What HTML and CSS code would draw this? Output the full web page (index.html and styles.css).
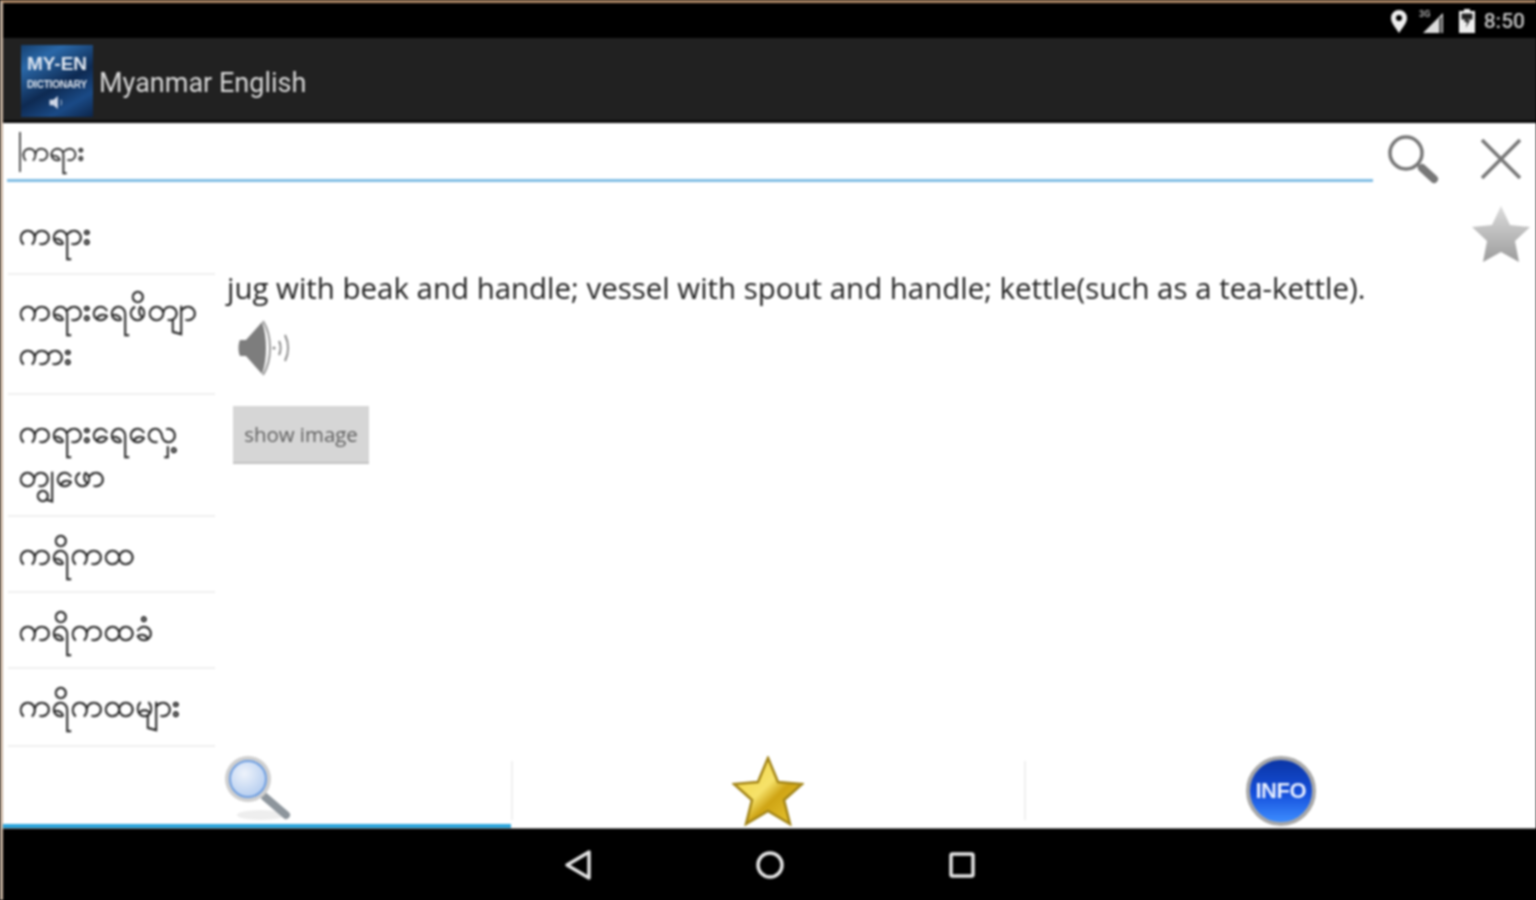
FILE: index.html
```html
<!DOCTYPE html>
<html lang="my">
<head>
    <meta charset="UTF-8">
    <title>Myanmar English</title>
    <link rel="stylesheet" href="styles.css">
</head>
<body>
    <div class="screen">
        <div class="status-bar">
            <svg class="st-pin" width="16" height="23" viewBox="0 0 16 23"><path d="M8 0a8 8 0 0 0-8 8c0 5 5 10 8 15 3-5 8-10 8-15a8 8 0 0 0-8-8z" fill="#eee"/><circle cx="8" cy="8" r="3" fill="#000"/></svg>
            <svg class="st-signal" width="26" height="26" viewBox="0 0 26 26"><path d="M24 5v20H4z" fill="#dcdcdc"/><path d="M20 11v14h3V8z" fill="#555"/><text x="0" y="9" class="st-3g">3G</text></svg>
            <svg class="st-batt" width="16" height="24" viewBox="0 0 16 24"><path d="M5 0h6v2h5v22H0V2h5z" fill="#eee"/><path d="M2.500 4.500h11v6h-11z" fill="#222"/><path d="M9 5 5 13h3l-1 6 4-8H8z" fill="#222"/></svg>
            <span class="clock">8:50</span>
        </div>
        <div class="action-bar">
            <div class="logo">
                <span class="logo-top">MY-EN</span>
                <span class="logo-mid">DICTIONARY</span>
                <svg width="18" height="15" viewBox="0 0 18 16"><path d="M1 5h4l5-4v14l-5-4H1z" fill="#cdd6e6"/><path d="M13 5c1 2 1 4 0 6" stroke="#cdd6e6" fill="none"/></svg>
            </div>
            <span class="app-title">Myanmar English</span>
        </div>
        <div class="search-row">
            <div class="search-input"><span class="caret"></span><span class="my search-text">ကရား</span></div>
            <svg class="search-icon" width="52" height="50" viewBox="0 0 52 50"><circle cx="19" cy="19" r="16" fill="none" stroke="#777" stroke-width="3.500"/><path d="M31 31l4 4" stroke="#777" stroke-width="3"/><path d="M35 34l12 11" stroke="#777" stroke-width="8" stroke-linecap="round"/></svg>
            <svg class="clear-icon" width="42" height="42" viewBox="0 0 42 42"><path d="M2 2l38 38M40 2 2 40" stroke="#777" stroke-width="3.500"/></svg>
        </div>
        <div class="main">
            <ul class="word-list">
                <li class="my">ကရား</li>
                <li class="my">ကရားရေဖိတျာ ကား</li>
                <li class="my">ကရားရေလှေ့ တျွဖော</li>
                <li class="my">ကရိကထ</li>
                <li class="my">ကရိကထခံ</li>
                <li class="my">ကရိကထများ</li>
            </ul>
            <div class="detail">
                <div class="detail-body">
                    <p class="meaning">jug with beak and handle; vessel with spout and handle; kettle(such as a tea-kettle).</p>
                    <svg class="speaker" width="54" height="56" viewBox="0 0 54 56"><path d="M3 20h6L25 2c3 8 4 17 4 26s-1 18-4 26L9 36H3c-2-4-2-12 0-16z" fill="#7d7d7d"/><path d="M26 1c5 8 7 18 7 27s-2 19-7 27" fill="none" stroke="#999" stroke-width="2"/><circle cx="37" cy="28" r="1.500" fill="#888"/><path d="M42 21c2 4 2 10 0 14M48 15c4 8 4 18 0 26" fill="none" stroke="#888" stroke-width="2"/></svg>
                    <button class="show-btn">show image</button>
                </div>
                <svg class="fav-star" width="60" height="58" viewBox="0 0 60 58"><defs><linearGradient id="gs" x1="0" y1="0" x2="0" y2="1"><stop offset="0" stop-color="#dcdcdc"/><stop offset="1" stop-color="#9c9c9c"/></linearGradient></defs><path d="M30 1l9 19 20 2-15 14 4 21-18-10-18 10 4-21L1 22l20-2z" fill="url(#gs)"/></svg>
            </div>
        </div>
        <div class="tabs">
            <div class="tab active">
                <svg class="lens-icon" width="68" height="66" viewBox="0 0 68 66"><defs><radialGradient id="lens" cx=".4" cy=".35" r=".7"><stop offset="0" stop-color="#eef3fb"/><stop offset="1" stop-color="#b3ccef"/></radialGradient></defs><ellipse cx="38" cy="60" rx="24" ry="5" fill="#eee"/><path d="M42 42l21 18" stroke="#8d959c" stroke-width="8" stroke-linecap="round"/><circle cx="25" cy="24" r="23" fill="#cfcfcf"/><circle cx="25" cy="24" r="18" fill="url(#lens)" stroke="#6f9fe2" stroke-width="2"/></svg>
            </div>
            <div class="tab">
                <svg class="gold-star" width="72" height="70" viewBox="0 0 72 70"><defs><linearGradient id="gold" x1="0" y1="0" x2="1" y2="1"><stop offset="0" stop-color="#f3d23c"/><stop offset=".45" stop-color="#f6e26a"/><stop offset=".6" stop-color="#cfa414"/><stop offset="1" stop-color="#eccb36"/></linearGradient></defs><path d="M36 2l10 24 24 2-18 16 6 24-22-13-22 13 6-24L2 28l24-2z" fill="url(#gold)" stroke="#a38517" stroke-width="2.500"/></svg>
            </div>
            <div class="tab">
                <div class="info-btn">INFO</div>
            </div>
        </div>
        <div class="nav-bar">
            <svg width="28" height="32" viewBox="0 0 28 32"><path d="M25 3v26L3 16z" fill="none" stroke="#e4e4e4" stroke-width="3.500" stroke-linejoin="round"/></svg>
            <svg width="30" height="30" viewBox="0 0 30 30"><circle cx="15" cy="15" r="12" fill="none" stroke="#e4e4e4" stroke-width="3.500"/></svg>
            <svg width="28" height="28" viewBox="0 0 28 28"><rect x="3" y="3" width="22" height="22" rx="1.500" fill="none" stroke="#e4e4e4" stroke-width="3.500"/></svg>
        </div>
    </div>
</body>
</html>
```

FILE: styles.css
```css
html, body {
    margin: 0;
    padding: 0;
    background: #000;
}
.screen {
    width: 1536px;
    height: 900px;
    box-sizing: border-box;
    display: flex;
    flex-direction: column;
    border-top: 3px solid #b08a68;
    border-left: 3px solid #c9b5a3;
    background: #fff;
    font-family: "Open Sans", "Noto Sans", sans-serif;
    overflow: hidden;
    filter: blur(0.9px);
}
.my {
    font-family: "Noto Sans", "DejaVu Sans", sans-serif;
    -webkit-text-stroke: 0.4px #222;
}

/* status bar */
.status-bar {
    height: 35px;
    flex: none;
    background: #000;
    display: flex;
    align-items: center;
    justify-content: flex-end;
    padding-right: 11px;
}
.st-pin { margin-right: 12px; margin-top: 2px; }
.st-signal { margin-right: 14px; }
.st-batt { margin-right: 9px; }
.st-3g {
    font-size: 9px;
    font-weight: bold;
    fill: #aaa;
    font-family: "Roboto", sans-serif;
}
.clock {
    color: #c4c4c4;
    font: 500 21px "Roboto", sans-serif;
}

/* action bar */
.action-bar {
    height: 85px;
    box-sizing: border-box;
    flex: none;
    background: #212121;
    border-bottom: 3px solid #0c0c0c;
    display: flex;
    align-items: center;
    padding: 4px 0 0 18px;
}
.logo {
    width: 72px;
    height: 72px;
    background: linear-gradient(150deg, #16406f, #2a68a8 22%, #0e2a52 55%, #1a4a86 78%, #0c2448);
    color: #dfe6f0;
    display: flex;
    flex-direction: column;
    align-items: center;
    font-family: "Liberation Sans", sans-serif;
    font-weight: bold;
    margin-right: 6px;
}
.logo-top { font-size: 19px; margin-top: 10px; line-height: 18px; }
.logo-mid { font-size: 10px; margin-top: 6px; line-height: 12px; white-space: nowrap; letter-spacing: -0.2px; }
.logo svg { margin-top: 4px; }
.app-title {
    color: #d8d8d8;
    font: 400 27px "Roboto", sans-serif;
    margin-top: 4px;
}

/* search */
.search-row {
    height: 60px;
    flex: none;
    display: flex;
    align-items: flex-start;
}
.search-input {
    width: 1366px;
    height: 59px;
    margin-left: 4px;
    box-sizing: border-box;
    border-bottom: 3px solid #80bde4;
    display: flex;
    align-items: center;
    padding: 1px 0 0 12px;
    font-size: 28px;
    color: #333;
}
.search-text { margin-top: 3px; }
.caret {
    width: 2px;
    height: 40px;
    background: #555;
}
.search-icon { margin: 11px 0 0 14px; }
.clear-icon { margin: 15px 0 0 41px; }

/* body */
.main {
    flex: 1;
    display: flex;
    min-height: 0;
}
.word-list {
    list-style: none;
    margin: 0 0 0 5px;
    padding: 16px 0 0;
    width: 207px;
    flex: none;
    font-size: 33px;
    line-height: 44px;
    color: #222;
}
.word-list li {
    box-sizing: border-box;
    min-height: 76px;
    padding: 14px 5px 16px 10px;
    border-bottom: 2px solid #efefef;
}
.word-list li:first-child { padding-top: 12px; padding-bottom: 18px; }
.word-list li:nth-child(2) { padding-top: 12px; padding-bottom: 18px; }
.word-list li:nth-child(3) { padding-bottom: 18px; }
.word-list li:last-child { padding-bottom: 18px; }
.detail {
    flex: 1;
    display: flex;
    align-items: flex-start;
    justify-content: space-between;
    padding-left: 12px;
}
.detail-body {
    padding-top: 85px;
    display: flex;
    flex-direction: column;
    align-items: flex-start;
}
.meaning {
    margin: 0;
    font-size: 29.45px;
    line-height: 40px;
    color: #222;
    white-space: nowrap;
}
.speaker { margin: 12px 0 0 10px; }
.show-btn {
    margin: 30px 0 0 6px;
    width: 136px;
    height: 58px;
    border: none;
    border-bottom: 2px solid #c2c2c2;
    background: #d6d6d6;
    color: #5e5e5e;
    font: 20.4px "Open Sans", sans-serif;
    padding: 0;
}
.fav-star { margin: 22px 5px 0 0; flex: none; }

/* tabs */
.tabs {
    height: 79px;
    flex: none;
    display: flex;
    border-bottom: 1px solid #777;
}
.tab {
    flex: 1;
    display: flex;
    align-items: center;
    justify-content: center;
    position: relative;
    padding-left: 2px;
}
.tab + .tab::before {
    content: "";
    position: absolute;
    left: 0;
    top: 12px;
    bottom: 8px;
    width: 2px;
    background: #efefef;
}
.tab.active {
    flex: none;
    width: 508px;
    box-sizing: border-box;
    border-bottom: 4px solid #2aa5dc;
    padding-left: 0;
}
.lens-icon { margin: 1px 0 -1px 0; }
.gold-star { margin-top: 5px; }
.info-btn {
    width: 62px;
    height: 62px;
    margin-top: 4px;
    border-radius: 50%;
    border: 4px solid #a8a8a8;
    background: linear-gradient(#0b35a5, #1550dc 55%, #3d8dff);
    color: #e6eeff;
    font: bold 22px "Liberation Sans", sans-serif;
    display: flex;
    align-items: center;
    justify-content: center;
    letter-spacing: -0.5px;
}

/* nav */
.nav-bar {
    height: 71px;
    flex: none;
    background: #000;
    display: flex;
    align-items: center;
    justify-content: center;
    gap: 163px;
}
```
